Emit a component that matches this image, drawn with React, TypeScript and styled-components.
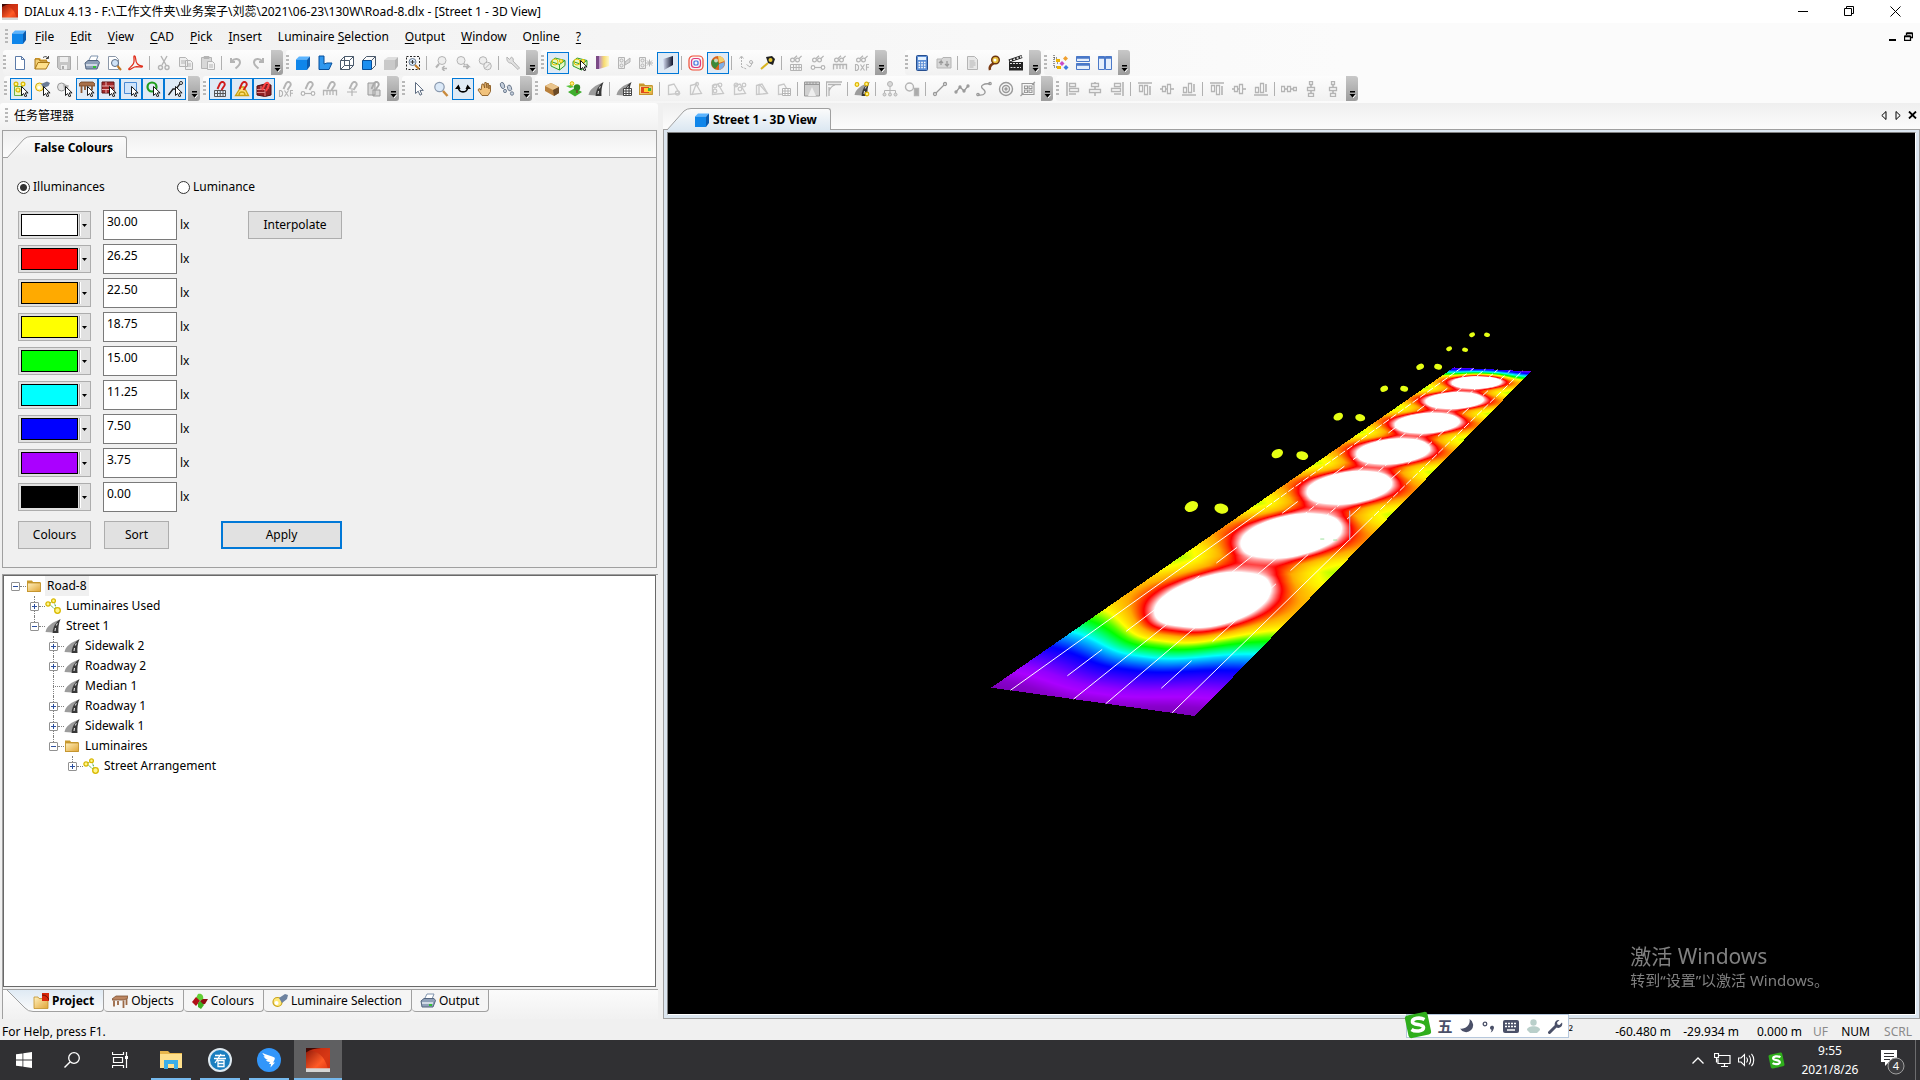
import React, { useLayoutEffect, useRef, useState } from "react";
import styled, { createGlobalStyle, css } from "styled-components";

/* ------------------------------------------------------------------ */
/* Theme values                                                        */
/* ------------------------------------------------------------------ */

const ui = `"Noto Sans", "Noto Sans CJK SC", sans-serif`;
const line = "#a0a0a0";
const accent = "#0078d7";

const GlobalStyle = createGlobalStyle`
  *, *::before, *::after { box-sizing: border-box; }
  html, body, #root { height: 100%; margin: 0; }
  body { font: 12px/16px ${ui}; color: #000; background: #f0f0f0; overflow: hidden; }
  button, input { font: inherit; color: inherit; margin: 0; }
  button { padding: 0; border: 0; background: none; }
  ul { list-style: none; margin: 0; padding: 0; }
  svg { display: block; flex: none; }
`;

/* ------------------------------------------------------------------ */
/* Icons, all on a 16 x 16 grid                                        */
/* ------------------------------------------------------------------ */

const G = "#b4b4b4";
const L = "#d8d8d8";

const magnet = (c: string) => (
  <path d="M5.5 8 8 2.500Q9.500 .2 11.500 1.200 13.500 2.500 12.300 4.800L9.500 9" fill="none" stroke={c} strokeWidth="1.900" />
);
const cursor = (
  <path d="M8.500 5.500v9l2.200-2 1.500 3.300 1.500-.7-1.400-3.200h2.800z" fill="#fff" stroke="#000" strokeWidth=".9" />
);
const glasses = (
  <g fill="none" stroke={G} strokeWidth="1.200">
    <circle cx="4.500" cy="5" r="1.900" /><circle cx="9.500" cy="5" r="1.900" /><path d="M6 3.500 9 .8M11 3.500l2.600-2.700" />
  </g>
);
const grid = (c: string) => (
  <path d="M2.500 9.500h11v6h-11zM2.500 12.500h11M5.500 9.500v6M8.200 9.500v6M11 9.500v6" fill="none" stroke={c} strokeWidth="1" />
);
const ruler = <path d="M1.500 14.500v-5h13v5M5 10v4M8 10v4M11 10v4" fill="none" stroke={G} strokeWidth="1.300" />;
const bone = (
  <g fill="#fff" stroke={G} strokeWidth="1.200"><path d="M4 12.500h8" /><circle cx="3" cy="12.500" r="1.800" /><circle cx="13" cy="12.500" r="1.800" /></g>
);
const dxf = (
  <path d="M1.500 9.500v6h1.500l1.500-1.500v-3L3 9.500zM6.500 9.500l4 6M10.500 9.500l-4 6M15 9.500h-2.500v6M12.500 12.300H15" fill="none" stroke={G} strokeWidth="1.100" />
);
const lamps = (
  <g>
    <path d="M4 5.500 8.500 3M4 6l7.500 6.500M9 3.500l2.500 8" stroke="#3aa33a" strokeWidth="1" strokeDasharray="2 1" />
    <g fill="#fff68a" stroke="#d9b800" strokeWidth="1.300"><circle cx="3" cy="6" r="2.100" /><circle cx="8.500" cy="2.800" r="1.900" /><circle cx="12.500" cy="12.500" r="2.800" /></g>
  </g>
);
const polyShape = (extra: React.ReactNode) => (
  <g fill="none" stroke="#c8c8c8" strokeWidth="1.300"><path d="M2.500 4.500 8 3l5.500 9.500-11 1z" />{extra}</g>
);
const road = (
  <g>
    <path d="M.5 14C1.500 8.500 7 4 15.500 1.500 11.500 5 8.500 9 7.500 14.500z" fill="#9c9c9c" />
    <path d="M7.500 15C8 9 10.500 4.500 15.500 1c-2 5-2.300 9-2 14z" fill="#383838" />
    <path d="M10 13l.5-3M11.300 7.500l1-2.200" stroke="#fff" strokeWidth=".9" />
  </g>
);
const greenCase = (
  <g strokeWidth="1" stroke="#2f9e2f"><path d="M1 6.500 5 3l10 2.500v5L9.500 15 1 11z" fill="#eaf7c4" /><path d="M1 6.500 9.500 9.500 15 5.500M9.500 9.500V15" fill="none" /><circle cx="5" cy="7" r="3" fill="none" stroke="#e5c400" /><circle cx="11" cy="6" r="1.600" fill="#ffe96b" stroke="#e5c400" /></g>
);
const cube = (
  <g><path d="M1 4.500 4 1.500h11l-3 3z" fill="#5ab4ff" /><path d="M1 4.500h11V15H1z" fill="#0f86ea" /><path d="M12 4.500l3-3V11l-3 4z" fill="#0a5cb0" /></g>
);
const folder = (
  <g><path d="M1 4V2.500h5l1 1.500h7.500V14H1z" fill="#c99a2e" /><path d="M1.500 5h13v8.500h-13z" fill="url(#fold)" stroke="#c0902a" strokeWidth=".8" /></g>
);
const printer = (
  <g><path d="M4.500 6 7 1h7l-2 5z" fill="#fff" stroke="#7f93ad" /><path d="M1 8l3-2.500h10l1.500 2L13 14H2z" fill="#8fa0b8" stroke="#53657f" /><path d="M2 10h11" stroke="#e6edf5" strokeWidth="1.500" /><path d="M9 12h3" stroke="#28c428" strokeWidth="1.800" /></g>
);
const dialux = (
  <g><path d="M0 0h16v16H0z" fill="url(#dx)" /><path d="M0 1.500C7 1 12.500 5 14.500 13.500H16V0H0z" fill="#c92c10" opacity=".75" /><path d="M0 0h10C6 .3 3 1 0 3z" fill="#3f0a05" /><path d="M0 13.500h16V16H0z" fill="#d5d5d5" /></g>
);
const footprint = (
  <g fill="#c4cedb" stroke="#5c6b80" strokeWidth=".8"><ellipse cx="3.500" cy="4.500" rx="2" ry="3.200" transform="rotate(-20 3.500 4.500)" /><ellipse cx="6" cy="10" rx="1.500" ry="1.700" /><ellipse cx="10.500" cy="7" rx="2" ry="3" transform="rotate(-20 10.500 7)" /><ellipse cx="13" cy="12.500" rx="1.600" ry="1.800" /></g>
);
const alignBar = (d: string, bars: string) => (
  <g fill="#fff" stroke={G} strokeWidth="1.300"><path d={d} fill="none" strokeWidth="1.600" /><path d={bars} /></g>
);

const icons: Record<string, React.ReactNode> = {
  dialux, cube, folder, printer, lamps, road,
  newFile: <path d="M3.500 1.500h6l3 3v10h-9zM9.500 1.500v3h3" fill="#fff" stroke="#5b7aa8" />,
  open: <g><path d="M1 3h5l1 1.500h6V7H1z" fill="#e0a83a" /><path d="M1 14V4h4l1 2h7v2" fill="#f4cf74" stroke="#a87716" /><path d="M1 14l3-6.500h11.500L12 14z" fill="#ffe08a" stroke="#a87716" /><path d="M9 2.500c2-1.500 4-1 5 .5M14.500 1v2.500H12" fill="none" stroke="#444" /></g>,
  save: <g><path d="M1.500 1.500h13v13h-11l-2-2z" fill="#c6c6c6" stroke="#aaa" /><path d="M4 2h8v5H4zM5 10h6v4.500H5z" fill="#eee" /><path d="M6 11h2v3H6z" fill="#aaa" /></g>,
  preview: <g><path d="M2.500 1.500h7l3 3v10h-10z" fill="#fff" stroke="#8b97a8" /><circle cx="9" cy="8" r="3.500" fill="#cfe3f7" stroke="#5a6c85" /><path d="M11.500 11l3.500 4" stroke="#c07a24" strokeWidth="2" /></g>,
  pdf: <path d="M6.500 1c2 0 0 5 3 8s5 1 5 2.500-5-.5-8 .5-4.500 3.500-5.500 2.500 3-3 4.500-6S5 1 6.500 1z" fill="none" stroke="#e0301e" strokeWidth="1.300" />,
  cut: <g fill="none" stroke={G} strokeWidth="1.400"><path d="M5 1l5 9M11 1 6 10" /><circle cx="4.500" cy="12.500" r="2" /><circle cx="11" cy="12.500" r="2" /></g>,
  copy: <path d="M1.500 2.500h6l2 2v7h-8zM7.500 5.500h5l2 2v7h-7zM3 6h4M3 8h4M9 9h4M9 11h4" fill="#eee" stroke={G} />,
  paste: <g stroke={G}><path d="M1.500 2.500h10v11h-10z" fill={L} /><path d="M4 1.500h5v2H4z" fill={G} /><path d="M7.500 6.500h5l2 2v6h-7zM9 10h4M9 12h4" fill="#f2f2f2" /></g>,
  undo: <path d="M3 3v4h4M3.500 6.500C6 3 12 3 12 7.500c0 2.500-2 4-4.500 6" fill="none" stroke={G} strokeWidth="2" />,
  redo: <path d="M13 3v4H9M12.500 6.500C10 3 4 3 4 7.500c0 2.500 2 4 4.500 6" fill="none" stroke={G} strokeWidth="2" />,
  lBlock: <path d="M2 1h5v8l3-1h5l-3 6.500H2z" fill="#2f97ee" stroke="#064f9b" />,
  wire: <path d="M1.500 5.500h9v9h-9zM5.500 1.500h9v9M1.500 5.500l4-4v9h9l-4 4M1.500 14.500l4-4M10.500 5.500l4-4" fill="#fff" stroke="#4b5a6c" />,
  halfCube: <g><path d="M1.500 5.500h9v9h-9z" fill="#1c8ff0" stroke="#064f9b" /><path d="M1.500 5.500l4-4h9v9l-4 4M10.500 5.500l4-4" fill="none" stroke="#4b5a6c" /></g>,
  greyCube: <g><path d="M1 5l4-3h10l-3 3z" fill="#dedede" /><path d="M1 5h11v10H1z" fill="#c9c9c9" /><path d="M12 5l3-3v9l-3 4z" fill="#b5b5b5" /></g>,
  zoomSel: <g><path d="M1.500 1.500h13v13h-13z" fill="none" stroke="#222" strokeDasharray="2 1.500" /><circle cx="7.500" cy="7" r="3.500" fill="#dcecfb" stroke="#6b7a90" /><path d="M5.500 7h4M7.500 5v4" stroke="#333" /><path d="M10 10l4 4" stroke="#c07a24" strokeWidth="2" /></g>,
  zoomPrev: <g stroke={G} fill="#eee"><circle cx="9" cy="5.500" r="4" /><path d="M6 9l-3 3.500" strokeWidth="2" /><path d="M9 13.500h5M9 13.500l2.500-2.500M9 13.500l2.500 2.500" strokeWidth="1.500" /></g>,
  zoomNext: <g stroke={G} fill="#eee"><circle cx="6" cy="5.500" r="4" /><path d="M9 9l4 4" strokeWidth="2" /><path d="M8 11.500h6l-2.500-2.500M14 11.500 11.500 14" strokeWidth="1.500" /></g>,
  zoomOff: <g stroke={G} fill="#eee"><circle cx="6" cy="5.500" r="3.800" /><circle cx="10.500" cy="11" r="3.800" /><path d="M8 13.500l5-5" /></g>,
  wrench: <path d="M2 2l2.500 2.500L6.500 2c2 1 2 3 1.500 4l6.500 7-1.500 1.500L6 8C4 8.500 1 6 2 2z" fill="#e2e2e2" stroke={G} />,
  room: greenCase,
  roomPick: <g>{greenCase}{cursor}</g>,
  texture: <g><path d="M2 1h3v13H2z" fill="#7b4a86" /><path d="M5 1h10v10L5 14z" fill="url(#tex)" /></g>,
  lightOn: <g stroke={G} fill="#eee"><path d="M2.500 2.500h6v11h-6z" /><circle cx="5.500" cy="5.500" r="1.500" /><circle cx="5.500" cy="10.500" r="1.500" /><path d="M9 7l5-4v4l-5 3z" fill={L} /></g>,
  lightStar: <g stroke={G} fill="#eee"><path d="M1.500 2.500h6v11h-6z" /><circle cx="4.500" cy="5.500" r="1.500" /><circle cx="4.500" cy="10.500" r="1.500" /><path d="M8 8h7M11.500 4.500v7M9 5.500l5 5M14 5.500l-5 5" /></g>,
  shade: <path d="M3 4l10-3v9L4 15z" fill="url(#shade)" />,
  iso: <g fill="none"><rect x="1" y="1" width="14" height="14" rx="4" stroke="#ef4b33" strokeWidth="1.200" /><rect x="3.500" y="3.500" width="9" height="9" rx="3" stroke="#e03a7b" strokeWidth="1.200" /><rect x="6" y="6" width="4" height="4" rx="1" stroke="#3a6de0" strokeWidth="1.200" /></g>,
  ball: <g><circle cx="8" cy="8" r="7" fill="#d8641c" /><path d="M8 1a7 7 0 0 1 6.500 5L9 8z" fill="#f3d06a" /><path d="M2 5l5-1 2 5-4 5A7 7 0 0 1 2 5z" fill="#3a8a3a" /><path d="M9 9l5.500-2A7 7 0 0 1 9 15z" fill="#7fb0e8" /><circle cx="6" cy="5.500" r="2" fill="#fff" opacity=".7" /></g>,
  axis: <g fill="none" stroke={G}><path d="M3.500 2v10M3.500 12l5 2" strokeDasharray="2 1" /><path d="M1.500 3.500l2-2.500 2 2.500M8.500 9.500 12 12l3-5" /><circle cx="13" cy="7" r="1.500" /></g>,
  tape: <g><path d="M6 2l6-1 3 3-2 6-5-2z" fill="#222" /><circle cx="10.500" cy="5" r="2" fill="#e8c832" /><path d="M8 8l-7 6" stroke="#d8b420" strokeWidth="2" /></g>,
  seeGrid: <g>{glasses}{grid(G)}</g>,
  seeBone: <g>{glasses}{bone}</g>,
  seeRuler: <g>{glasses}{ruler}</g>,
  seeDxf: <g>{glasses}{dxf}</g>,
  calc: <g><rect x="2.500" y=".5" width="11" height="15" rx="1" fill="#5d8fd6" stroke="#274f8f" /><path d="M4 2h8v3H4z" fill="#e5f2ff" /><path d="M4.500 7.500h7M4.500 10h7M4.500 12.500h7" stroke="#fff" strokeWidth="1.500" strokeDasharray="1.600 1.100" /></g>,
  swap: <g><path d="M1 4h5l1-1.500h8V13H1z" fill={L} stroke={G} /><path d="M5 10V6L3 8M5 6l2 2M11 6v5l-2-2M11 11l2-2" fill="none" stroke="#999" strokeWidth="1.300" /></g>,
  report: <path d="M3.500 1.500h7l3 3v10h-10zM5.500 6h5M5.500 8h6M5.500 10h6M5.500 12h4" fill="#e8e8e8" stroke={G} />,
  pov: <g><path d="M4 15C2 9 9 9 9 7" fill="none" stroke="#7a3a12" strokeWidth="2.500" /><circle cx="9.500" cy="5" r="3.800" fill="#e9c13c" stroke="#6d3510" strokeWidth="1.400" /><circle cx="9" cy="5" r="1.500" fill="#fff" /></g>,
  film: <g><path d="M1 7h14v8.500H1z" fill="#222" /><path d="M1 6 14 1.500" stroke="#222" strokeWidth="3" /><path d="M2 5.700l11.500-4" stroke="#fff" strokeWidth="1.400" strokeDasharray="2 1.500" /><path d="M2 8.500h12M2.500 12.500h5M9 12.500h4" stroke="#ddd" strokeDasharray="2 1" /></g>,
  tree: <g><path d="M1 0v12M1 3h3M1 12h4M4 8h2" fill="none" stroke="#333" strokeDasharray="1 1" /><path d="M3 4h4v3H3zM4 11h4v3H4z" fill="#f0b400" /><path d="M12.500 1 15 3.500 12.500 6 10 3.500z" fill="#f0a030" /><path d="M9 6l2.500 2.500L9 11 6.500 8.500z" fill="#c84bc8" /><path d="M13 10l2.500 2.500L13 15l-2.500-2.500z" fill="#3a7be0" /></g>,
  tileH: <g fill="#e6effb" stroke="#4a78c8"><path d="M1.500 1.500h13v5h-13zM1.500 8.500h13v6h-13z" /><path d="M1.500 2.500h13M1.500 9.500h13" strokeWidth="2.500" /></g>,
  tileV: <g fill="#e6effb" stroke="#4a78c8"><path d="M1.500 1.500h6v13h-6zM8.500 1.500h6v13h-6z" /><path d="M1.500 2.500h6M8.500 2.500h6" strokeWidth="2.500" /></g>,
  pickLamps: <g><path d="M1.500 5.500h8v9h-8z" fill="#eef6c8" stroke="#6bb04a" /><g fill="#fff68a" stroke="#d9b800" strokeWidth="1.200"><circle cx="3" cy="3" r="1.900" /><circle cx="10" cy="3" r="1.900" /><circle cx="5" cy="9" r="2" /></g>{cursor}</g>,
  pickSpot: <g><circle cx="4.500" cy="6" r="4" fill="#fff3a0" stroke="#d4a800" /><circle cx="4" cy="6.500" r="1.600" fill="#fff" /><path d="M6 3l6-2.500 3 1.500-1.500 3L8.500 7z" fill="#6b7c96" />{cursor}</g>,
  pickGrey: <g><circle cx="4.500" cy="6" r="4" fill="#e4e4e4" stroke="#999" /><path d="M6 3l6 1.500-2 5-3-1z" fill="#b0b0b0" />{cursor}</g>,
  pickTable: <g><path d="M0 3l2-2h12l2 2v2H0z" fill="#a8704a" stroke="#6e4222" strokeWidth=".8" /><path d="M2.500 5v7M13 5v4M6 5v4" stroke="#8d5a36" strokeWidth="1.800" />{cursor}</g>,
  pickWall: <g><path d="M1 1h12v11H1z" fill="#a52a2a" stroke="#5e1414" /><path d="M1 5h12M1 8.500h12M5 1v4M9 5v3.500M5 8.500V12" stroke="#e8b0b0" />{cursor}</g>,
  pickArea: <g><path d="M1.500 1.500h12v11h-12z" fill="#cfe4fb" stroke="#4a8ad4" />{cursor}</g>,
  pickRing: <g><circle cx="7" cy="6" r="4.500" fill="none" stroke="#1e9e1e" strokeWidth="2.200" />{cursor}</g>,
  pickLine: <g><path d="M1.500 14 6 8h3l5-6.500" fill="none" stroke="#222" strokeWidth="1.300" /><circle cx="14" cy="2" r="1.500" fill="#fff" stroke="#222" />{cursor}</g>,
  snapGrid: <g>{grid("#555")}{magnet("#d01c1c")}</g>,
  snapAngle: <g><path d="M1.500 14.500 7 6h3l4.500 8.500zM5 14a3 3 0 0 1 6 0" fill="#ffe27a" stroke="#caa010" strokeWidth="1.300" />{magnet("#d01c1c")}</g>,
  snapWall: <g><path d="M1 5l8-2 6 1v10l-6 1.500L1 14z" fill="#8f1f24" stroke="#4d0d10" /><path d="M1 8.500h8M1 11.500h8M5 5v3.500M9 8.500v7M12 4v4" stroke="#d88" /><path d="M6 9 8.500 4q2-3.500 4-1.500 1 2-1 4.500L10 10" fill="none" stroke="#ff4040" strokeWidth="1.800" /></g>,
  gSnapDxf: <g>{dxf}{magnet(G)}</g>,
  gSnapBone: <g>{bone}{magnet(G)}</g>,
  gSnapRuler: <g>{ruler}{magnet(G)}</g>,
  gSnapPlus: <g><path d="M3 11h10M8 7v8" stroke={G} strokeWidth="1.200" />{magnet(G)}</g>,
  gSnapPaste: <g><path d="M2 2h7v12H2zM7 9h7v6H7z" fill={L} stroke="#999" />{magnet("#aaa")}</g>,
  arrow: <path d="M4.500 1.500v11l2.700-2.300 1.800 4 1.800-.9-1.800-3.900h3.300z" fill="#fff" stroke="#5c6b80" />,
  zoom: <g><circle cx="6.500" cy="6" r="4.700" fill="#dbe9f8" stroke="#8a99ae" strokeWidth="1.200" /><path d="M10 10l4.500 5" stroke="#c98a3c" strokeWidth="2.500" /></g>,
  orbit: <g><path d="M3 6c1 6.500 9 6.500 10 0" fill="none" stroke="#000" strokeWidth="1.600" /><path d="M0 8l3.500-4.500L5.500 8zM10.500 8l2-4.500L16 8z" /></g>,
  hand: <path d="M4 9 2 7.500 1 9l4 5.500h6l2.500-4V4.500H12V8l-.5-5.500H10V7L9.200 1.500H7.800L7.700 7 6.500 3H5z" fill="#f1c27c" stroke="#8a5a20" strokeWidth=".9" />,
  feet: footprint,
  box: <g><path d="M1 5l6-3 8 4v6l-5 3-9-5z" fill="#b9803c" /><path d="M1 5l6-3 8 4-6 3z" fill="#e9c48c" /><path d="M9 9l6-3v6l-5 3z" fill="#6b4a26" /></g>,
  plant: <g><path d="M2 11l7-4 7 4-7 4.500z" fill="#3fae2e" /><path d="M0 5l5-1 3 2-4 1z" fill="#57c43c" /><circle cx="6" cy="2.500" r="1.800" fill="#fff08a" stroke="#d9b800" /><circle cx="11" cy="6.500" r="3.200" fill="#2d8b22" /><path d="M11 9v3" stroke="#6b4a26" strokeWidth="1.500" /></g>,
  roadGrid: <g>{road}<path d="M7.500 7.500h8v7h-8zM7.500 10h8M7.500 12.500h8M10 7.500v7M13 7.500v7" fill="#fff" stroke="#444" /></g>,
  falseFolder: <g>{folder}<path d="M3 6h8v6H3z" fill="#e04a1c" /><path d="M6 7h7v4H6z" fill="#ffd12a" /><path d="M10 7h3v3h-3z" fill="#3cb43c" /></g>,
  poly1: polyShape(<circle cx="11.500" cy="12" r="2" />),
  poly2: polyShape(<g><path d="M9 1 4 14" /><circle cx="9" cy="3" r="1.500" /></g>),
  poly3: polyShape(<g><circle cx="5" cy="5" r="1.800" /><circle cx="10" cy="4" r="1.800" /><circle cx="5" cy="10" r="1.800" /></g>),
  poly4: polyShape(<g><circle cx="4" cy="4" r="1.800" /><circle cx="12" cy="4" r="1.800" /><circle cx="8" cy="8" r="1.800" /></g>),
  poly5: polyShape(<path d="M5 3v11M5 3l8 9" />),
  poly6: <g>{polyShape(null)}<path d="M6.500 7.500h8v7h-8zM6.500 10h8M6.500 12.500h8M9 7.500v7M12 7.500v7" fill="#fff" stroke={G} /></g>,
  frame1: <g><path d="M.5 1h15v14H.5z" fill="#d0d0d0" stroke="#999" /><path d="M.5 3.500h15M3 1v2M6 1v2M9 1v2M12 1v2" stroke="#999" /><path d="M4 15 8 6l4 9z" fill="#eee" /></g>,
  frame2: <path d="M16 1H.5v14.500M2 3.500h13M3 6v9M3 10c1-3 3-5 6-6" fill="none" stroke={G} strokeWidth="1.300" />,
  roadLamps: <g>{road}<g fill="#fff68a" stroke="#e0b400" strokeWidth="1.200"><circle cx="3" cy="3.500" r="1.800" /><circle cx="12.500" cy="3" r="1.800" /><circle cx="13" cy="13" r="1.800" /></g></g>,
  org: <g fill={L} stroke={G}><circle cx="8" cy="3" r="2.500" /><path d="M8 6v4M2.500 12v-2.500h11V12M8 10v2" fill="none" /><circle cx="2.500" cy="13.500" r="1.500" /><circle cx="8" cy="13.500" r="1.500" /><circle cx="13.500" cy="13.500" r="1.500" /></g>,
  phoneLamp: <g fill="none" stroke={G} strokeWidth="1.400"><circle cx="5.500" cy="6" r="4" /><path d="M10.500 7.500h4v7h-4z" fill="#aaa" /></g>,
  seg: <g stroke="#999" fill="#fff" strokeWidth="1.300"><path d="M3 13 13 3" /><circle cx="3" cy="13" r="1.500" /><circle cx="13" cy="3" r="1.500" /></g>,
  zig: <g stroke="#999" fill="none" strokeWidth="1.300"><path d="M2 11l4-5 4 4 4-5" /><circle cx="2" cy="11" r="1" /><circle cx="6" cy="6" r="1" /><circle cx="10" cy="10" r="1" /><circle cx="14" cy="5" r="1" /></g>,
  curve: <g stroke="#999" fill="none" strokeWidth="1.300"><path d="M2 14c7 1 9-3 5-6s1-6 7-5" /><circle cx="2" cy="13.500" r="1.200" /><circle cx="14" cy="2.500" r="1.200" /></g>,
  target: <g fill="none" stroke="#999" strokeWidth="1.400"><circle cx="8" cy="8" r="6.500" /><circle cx="8" cy="8" r="3.500" /><circle cx="8" cy="8" r="1" /></g>,
  mesh: <path d="M2 2.500h12v11H2zM4.500 5h3v2.500h-3zM9 5h3v2.500H9zM4.500 9h3v2.500h-3zM9 9h3v2.500H9zM.5 15l3-3M12 3.500 15 .8" fill="none" stroke="#999" strokeWidth="1.100" />,
  alL: alignBar("M2 1v14M4 13h7", "M4.500 2.500h6v3h-6zM4.500 7.500h9v3h-9z"),
  alC: alignBar("M8 1v14", "M4.500 2.500h7v3h-7zM2.500 8.500h11v3h-11z"),
  alR: alignBar("M14 1v14M5 13h7", "M5.500 2.500h6v3h-6zM2.500 7.500h9v3h-9z"),
  alT: alignBar("M1 2h14M13 14V5", "M2.500 4.500h3v6h-3zM7.500 4.500h3v9h-3z"),
  alM: alignBar("M1 8h14", "M3.500 5.500h3v5h-3zM8.500 3.500h3v9h-3z"),
  alB: alignBar("M1 14h14M13 3v8", "M2.500 6.500h3v5h-3zM7.500 2.500h3v9h-3z"),
  dsH: alignBar("M3 8h10", "M.5 5.500h3v5h-3zM6.500 5.500h3v5h-3zM12.500 6.500h3v3h-3z"),
  dsV: alignBar("M8 3v11", "M6.500 .5h3v3h-3zM4.500 6.500h7v3h-7zM5.500 12.500h5v3h-5z"),
  project: <g><path d="M1 4h4l1 1.500h9V15.500H1z" fill="url(#fold)" stroke="#c0902a" strokeWidth=".8" /><path d="M9 0h7v8H9z" fill="#d8280c" /><path d="M9 2c4 0 6 2 7 5" fill="none" stroke="#6a1005" /></g>,
  table: <g><path d="M0 6l4-3h12v2l-4 2H0z" fill="#bb8560" stroke="#7b4f30" strokeWidth=".8" /><path d="M2 7.500v6M11.500 7.500V15M14.500 6v6M6 8v4" stroke="#9b6844" strokeWidth="1.800" /></g>,
  colours: <g><path d="M6 1c4-1 6 2 5 6L7 8 4 5z" fill="#63cf35" /><path d="M0 9l4-5 4 4-4 5z" fill="#b01018" /><path d="M8 8l3-2h5l-3 5-4 1z" fill="#8e0c12" /><path d="M6 10l2-2 4 4-3 4-3-2z" fill="#3fae20" /></g>,
  torch: <g><circle cx="5.500" cy="9" r="4.500" fill="#ffe97a" stroke="#c9a21a" strokeWidth="1.200" /><circle cx="4.500" cy="10" r="2" fill="#fff" /><path d="M7 5l6-4 3 1-1 4-5 4z" fill="#6d829f" /></g>,
};

const Icon = ({ name, size = 16 }: { name: string; size?: number }) => (
  <svg width={size} height={size} viewBox="0 0 16 16" aria-hidden="true">{icons[name]}</svg>
);

const HiddenDefs = styled.svg`
  position: absolute;
`;
const Gradients = () => (
  <HiddenDefs width="0" height="0" aria-hidden="true">
    <defs>
      <linearGradient id="fold" x2="1" y2="1"><stop stopColor="#fff0bd" /><stop offset="1" stopColor="#e0a536" /></linearGradient>
      <linearGradient id="dx" x2="1" y2="1"><stop stopColor="#8a1407" /><stop offset=".6" stopColor="#ff5a26" /><stop offset="1" stopColor="#d8300f" /></linearGradient>
      <linearGradient id="tex"><stop stopColor="#b98ad0" /><stop offset=".5" stopColor="#f7dc70" /><stop offset="1" stopColor="#fff7c8" /></linearGradient>
      <linearGradient id="shade"><stop stopColor="#d8e0f4" /><stop offset="1" stopColor="#10142c" /></linearGradient>
    </defs>
  </HiddenDefs>
);

/* ------------------------------------------------------------------ */
/* Title bar and menu                                                  */
/* ------------------------------------------------------------------ */

const Window = styled.div`
  height: 100vh;
  display: flex;
  flex-direction: column;
`;

const TitleBar = styled.header`
  display: flex;
  align-items: center;
  height: 23px;
  flex: none;
  padding: 0 2px;
  background: #fff;
`;
const Title = styled.h1`
  flex: 1;
  margin: 0 0 0 6px;
  font-size: 12px;
  font-weight: 400;
`;
const CaptionButton = styled.button`
  width: 46px;
  height: 22px;
  display: grid;
  place-items: center;
`;
const Chrome = styled.div`
  flex: none;
  padding-bottom: 1px;
  background: linear-gradient(90deg, #f0f0f0, #fbfbfb 70%);
`;
const MenuBar = styled.nav`
  display: flex;
  align-items: center;
  height: 27px;
  padding: 0 4px 0 5px;
`;
const MenuItem = styled.button`
  padding: 0 8px;
  line-height: 20px;
  u { text-underline-offset: 2px; }
`;
const Spacer = styled.div`
  flex: 1;
`;
const MdiButton = styled.button`
  width: 16px;
  height: 16px;
  display: grid;
  place-items: center;
`;

const menu: [string, string, string][] = [
  ["", "F", "ile"], ["", "E", "dit"], ["", "V", "iew"], ["", "C", "AD"], ["", "P", "ick"], ["", "I", "nsert"],
  ["Luminaire ", "S", "election"], ["", "O", "utput"], ["", "W", "indow"], ["O", "n", "line"], ["", "?", ""],
];

/* ------------------------------------------------------------------ */
/* Toolbars                                                            */
/* ------------------------------------------------------------------ */

const ToolRow = styled.div<{ $inset: number }>`
  display: flex;
  height: 26px;
  padding-left: ${p => p.$inset}px;
  gap: 3px;
`;
const Tools = styled.div<{ $apart?: boolean }>`
  display: flex;
  align-items: center;
  height: 25px;
  margin-left: ${p => (p.$apart ? "15px" : 0)};
  border-radius: 3px 0 0 3px;
  background: linear-gradient(#fdfdfd, #f1f1f1);
`;
const Grip = styled.span`
  width: 3px;
  height: 15px;
  margin-right: 3px;
  background: repeating-linear-gradient(#b8b8b8 0 2px, transparent 2px 4px);
`;
const ToolButton = styled.button<{ $on?: boolean }>`
  width: 22px;
  height: 22px;
  display: grid;
  place-items: center;
  ${p => p.$on && css`border: 1px solid ${accent}; background: #dfeaf5;`}
`;
const Divider = styled.span`
  width: 1px;
  height: 14px;
  margin: 0 3px 0 2px;
  background: #b0b0b0;
`;
const Overflow = styled.button`
  width: 12px;
  height: 25px;
  margin-left: 2px;
  display: flex;
  align-items: flex-end;
  justify-content: center;
  padding-bottom: 3px;
  border-radius: 0 3px 3px 0;
  background: linear-gradient(#c8c8c8, #9c9c9c);
`;

/* "|" is a divider, a leading "*" marks a pressed button */
const rowOne = [
  "newFile open save | printer preview pdf | cut copy paste | undo redo",
  "cube lBlock wire halfCube greyCube zoomSel | zoomPrev zoomNext zoomOff | wrench",
  "*room roomPick texture lightOn lightStar *shade | iso *ball | axis tape | seeGrid seeBone seeRuler seeDxf",
  "calc swap | report pov film",
  "tree tileH tileV",
];
const rowTwo = [
  "*pickLamps pickSpot pickGrey *pickTable *pickWall *pickArea *pickRing *pickLine",
  "*snapGrid *snapAngle *snapWall gSnapDxf gSnapBone gSnapRuler gSnapPlus gSnapPaste",
  "arrow zoom *orbit hand feet",
  "box plant road | roadGrid falseFolder | poly1 poly2 poly3 poly4 poly5 poly6 | frame1 frame2 | roadLamps | org phoneLamp | seg zig curve target mesh",
  "alL alC alR | alT alM alB | alT alM alB | dsH dsV dsV",
];

const ToolGroup = ({ spec, apart }: { spec: string; apart?: boolean }) => (
  <Tools $apart={apart} role="toolbar">
    <Grip />
    {spec.split(" ").map((item, i) => {
      if (item === "|") return <Divider key={i} />;
      const name = item.replace("*", "");
      return (
        <ToolButton key={i} $on={item.startsWith("*")} aria-label={name}>
          <Icon name={name} />
        </ToolButton>
      );
    })}
    <Overflow aria-label="More buttons">
      <svg width="7" height="7" viewBox="0 0 7 7"><path d="M1 0h5v1.500H1zM.5 3h6l-3 3.500z" /><path d="M7 3.500 4 7" stroke="#fff" /></svg>
    </Overflow>
  </Tools>
);

/* ------------------------------------------------------------------ */
/* Left side: task manager                                             */
/* ------------------------------------------------------------------ */

const Body = styled.main`
  flex: 1;
  min-height: 0;
  display: flex;
  gap: 5px;
`;
const Manager = styled.aside`
  flex: 0 0 658px;
  display: flex;
  flex-direction: column;
  min-height: 0;
`;
const ManagerCaption = styled.div`
  display: flex;
  align-items: center;
  flex: none;
  height: 27px;
  padding: 0 0 2px 5px;
  gap: 3px;
  border-radius: 3px 3px 0 0;
  background: linear-gradient(#fdfdfd, #f1f1f1);
`;
const Panel = styled.section`
  flex: none;
  height: 438px;
  margin: 0 1px 6px 2px;
  border: 1px solid ${line};
  display: flex;
  flex-direction: column;
`;
const TopTabs = styled.div`
  display: flex;
  align-items: flex-end;
  flex: none;
  height: 27px;
  padding: 0 1px 0 4px;
  border-bottom: 1px solid ${line};
  background: linear-gradient(#efefef, #fcfcfc);
`;
const TopTab = styled.button`
  display: flex;
  height: 22px;
  margin-bottom: -1px;
  font-weight: 700;
`;
const TabFace = styled.span<{ $tint: string }>`
  display: flex;
  align-items: center;
  gap: 3px;
  height: 22px;
  padding: 0 13px 0 3px;
  border-top: 1px solid ${line};
  border-right: 1px solid ${line};
  border-radius: 0 3px 0 0;
  background: linear-gradient(#fbfbfb, ${p => p.$tint});
`;
const TabSlope = ({ id, tint }: { id: string; tint: string }) => (
  <svg width="24" height="22" viewBox="0 0 24 22">
    <linearGradient id={id} x2="0" y2="1"><stop stopColor="#fbfbfb" /><stop offset="1" stopColor={tint} /></linearGradient>
    <path d="M0 22 17 3Q20 .5 24 .5V22z" fill={`url(#${id})`} />
    <path d="M0 22 17 3Q20 .5 24 .5" fill="none" stroke={line} />
  </svg>
);
const Form = styled.form`
  flex: 1;
  padding: 20px 15px 0;
  background: #f0f0f0;
`;
const Radios = styled.div`
  display: grid;
  grid-template-columns: 160px auto;
  margin: 0 -1px 14px;
`;
const RadioLabel = styled.label`
  display: flex;
  align-items: center;
  gap: 3px;
  line-height: 18px;
`;
const Radio = styled.input`
  appearance: none;
  width: 13px;
  height: 13px;
  margin: 0;
  border: 1px solid #333;
  border-radius: 50%;
  background: #fff;
  &:checked { background: radial-gradient(circle, #333 0 3px, #fff 4px); }
`;
const Scale = styled.div`
  display: grid;
  row-gap: 4px;
`;
const ScaleRow = styled.div`
  display: flex;
  align-items: center;
  height: 30px;
`;
const Swatch = styled.button<{ $fill: string }>`
  width: 73px;
  height: 28px;
  margin-right: 12px;
  padding: 2px;
  display: flex;
  align-items: center;
  gap: 1px;
  border: 1px solid #adadad;
  background: #e1e1e1;
  &::before {
    content: "";
    width: 57px;
    height: 22px;
    border: 1px solid #000;
    background: ${p => p.$fill};
  }
`;
const Drop = styled.span`
  flex: 1;
  height: 22px;
  display: grid;
  place-items: center;
  border-left: 1px solid #a0a0a0;
  box-shadow: inset 1px 0 #fff;
`;
const ValueBox = styled.input`
  width: 74px;
  height: 30px;
  margin-right: 3px;
  padding: 0 3px 7px;
  border: 1px solid #7a7a7a;
  background: #fff;
`;
const Unit = styled.label`
  width: 68px;
`;
const PushButton = styled.button<{ $w: number; $main?: boolean }>`
  width: ${p => p.$w}px;
  height: 28px;
  border: ${p => (p.$main ? `2px solid ${accent}` : "1px solid #adadad")};
  background: #e1e1e1;
`;
const FormButtons = styled.div`
  display: flex;
  margin-top: 9px;
  gap: 13px;
  button:last-child { margin-left: 39px; }
`;

const levels: [string, string][] = [
  ["#ffffff", "30.00"], ["#ff0000", "26.25"], ["#ffaa00", "22.50"], ["#ffff00", "18.75"], ["#00ff00", "15.00"],
  ["#00ffff", "11.25"], ["#0000ff", "7.50"], ["#aa00ff", "3.75"], ["#000000", "0.00"],
];

const FalseColours = () => {
  const [mode, setMode] = useState("ill");
  return (
    <Panel>
      <TopTabs>
        <TopTab><TabSlope id="slopeA" tint="#f0f0f0" /><TabFace $tint="#f0f0f0">False Colours</TabFace></TopTab>
      </TopTabs>
      <Form onSubmit={e => e.preventDefault()}>
        <Radios>
          <RadioLabel><Radio type="radio" name="mode" checked={mode === "ill"} onChange={() => setMode("ill")} />Illuminances</RadioLabel>
          <RadioLabel><Radio type="radio" name="mode" checked={mode === "lum"} onChange={() => setMode("lum")} />Luminance</RadioLabel>
        </Radios>
        <Scale>
          {levels.map(([fill, value], i) => (
            <ScaleRow key={value}>
              <Swatch type="button" $fill={fill} aria-label={`Colour ${i + 1}`}>
                <Drop><svg width="5" height="3"><path d="M0 0h5L2.500 3z" /></svg></Drop>
              </Swatch>
              <ValueBox id={`level${i}`} defaultValue={value} />
              <Unit htmlFor={`level${i}`}>lx</Unit>
              {i === 0 && <PushButton type="button" $w={94}>Interpolate</PushButton>}
            </ScaleRow>
          ))}
        </Scale>
        <FormButtons>
          <PushButton type="button" $w={73}>Colours</PushButton>
          <PushButton type="button" $w={65}>Sort</PushButton>
          <PushButton type="submit" $w={121} $main>Apply</PushButton>
        </FormButtons>
      </Form>
    </Panel>
  );
};

/* Project tree */

const TreeFrame = styled.section`
  flex: 1;
  min-height: 0;
  margin-left: 2px;
  border: 1px solid ${line};
  border-right: 0;
  border-bottom: 0;
  display: flex;
  flex-direction: column;
`;
const TreeBox = styled.div`
  flex: 1;
  min-height: 0;
  margin-right: 2px;
  border: 1px solid #696969;
  background: #fff;
  padding-left: 7px;
`;
const Branch = styled.ul`
  ul { margin-left: 19px; }
`;
const Leaf = styled.li`
  position: relative;
  ul ul > &::before {
    content: "";
    position: absolute;
    left: 4px;
    top: 0;
    height: 10px;
    border-left: 1px dotted #808080;
  }
  ul ul > &:not(:last-child)::before { height: 100%; }
`;
const NodeRow = styled.div`
  position: relative;
  display: flex;
  align-items: center;
  height: 20px;
`;
const Expander = styled.button`
  width: 9px;
  height: 9px;
  border: 1px solid #919191;
  border-radius: 1px;
  background: #fff;
  display: grid;
  place-items: center;
`;
const Dots = styled.span<{ $long?: boolean }>`
  width: ${p => (p.$long ? 11 : 6)}px;
  margin-left: ${p => (p.$long ? 4 : 0)}px;
  border-top: 1px dotted #808080;
`;
const NodeName = styled.span<{ $sel?: boolean }>`
  margin-left: 3px;
  padding: 2px 2px;
  background: ${p => (p.$sel ? "#f0f0f0" : "none")};
`;

type TreeItem = { name: string; icon: string; kids?: TreeItem[]; closed?: boolean; sel?: boolean };
const tree: TreeItem = {
  name: "Road-8", icon: "folder", sel: true, kids: [
    { name: "Luminaires Used", icon: "lamps", closed: true },
    { name: "Street 1", icon: "road", kids: [
      { name: "Sidewalk 2", icon: "road", closed: true },
      { name: "Roadway 2", icon: "road", closed: true },
      { name: "Median 1", icon: "road" },
      { name: "Roadway 1", icon: "road", closed: true },
      { name: "Sidewalk 1", icon: "road", closed: true },
      { name: "Luminaires", icon: "folder", kids: [{ name: "Street Arrangement", icon: "lamps", closed: true }] },
    ] },
  ],
};
const TreeNode = ({ item }: { item: TreeItem }) => (
  <Leaf>
    <NodeRow>
      {(item.kids || item.closed) && (
        <Expander aria-label={item.closed ? "Expand" : "Collapse"}>
          <svg width="5" height="5"><path d={item.closed ? "M0 2.500h5M2.500 0v5" : "M0 2.500h5"} stroke="#2c4f9e" /></svg>
        </Expander>
      )}
      <Dots $long={!item.kids && !item.closed} />
      <Icon name={item.icon} />
      <NodeName $sel={item.sel}>{item.name}</NodeName>
    </NodeRow>
    {item.kids && <ul>{item.kids.map(k => <TreeNode key={k.name} item={k} />)}</ul>}
  </Leaf>
);

const BottomTabs = styled.div`
  flex: none;
  display: flex;
  height: 30px;
  margin-top: 2px;
  border-top: 1px solid ${line};
  background: linear-gradient(#fbfbfb, #f1f1f1);
`;
const BottomTab = styled.button<{ $on?: boolean }>`
  display: flex;
  align-items: center;
  gap: 3px;
  height: 22px;
  padding: 0 9px 0 ${p => (p.$on ? 0 : 8)}px;
  border-right: 1px solid ${line};
  border-bottom: 1px solid ${line};
  border-radius: 0 0 4px ${p => (p.$on ? 0 : 4)}px;
  font-weight: ${p => (p.$on ? 700 : 400)};
  background: ${p => (p.$on ? "linear-gradient(#dfeaf4, #fbfbfb)" : "#f5f5f5")};
`;
const BottomSlope = () => (
  <svg width="30" height="22" viewBox="0 0 30 22">
    <linearGradient id="slopeC" x2="0" y2="1"><stop stopColor="#dfeaf4" /><stop offset="1" stopColor="#fbfbfb" /></linearGradient>
    <path d="M4 0 22 18Q25 21.500 30 21.500V0z" fill="url(#slopeC)" />
    <path d="M4 0 22 18Q25 21.500 30 21.500" fill="none" stroke={line} />
  </svg>
);

/* ------------------------------------------------------------------ */
/* Right side: 3D view                                                 */
/* ------------------------------------------------------------------ */

const Document = styled.section`
  flex: 1;
  min-width: 0;
  display: flex;
  flex-direction: column;
`;
const TabNav = styled.button`
  width: 14px;
  height: 26px;
  display: grid;
  place-items: center;
  padding-bottom: 2px;
`;
const ViewFrame = styled.div`
  flex: 1;
  min-height: 0;
  padding: 2px 3px 3px;
  border: 1px solid ${line};
  border-top: 0;
  background: #dce6f0;
  display: flex;
`;
const View = styled.div`
  position: relative;
  flex: 1;
  min-width: 0;
  border: 1px solid #808080;
  border-right-color: #fff;
  border-bottom-color: #fff;
  background: #000;
  overflow: hidden;
`;
const Scene = styled.canvas`
  display: block;
  width: 100%;
  height: 100%;
`;
const Watermark = styled.div`
  position: absolute;
  right: 86px;
  bottom: 22px;
  color: #808080;
  font-size: 15px;
  line-height: 24px;
`;
const WatermarkTitle = styled.div`
  font-size: 21px;
`;

/* Illuminance by distance from a pole pair, in pole spacings -> lux */
const fallOff: [number, number][] = [
  [0, 40], [0.1, 39.3], [0.2, 36], [0.27, 31.5], [0.31, 28.5], [0.36, 25], [0.42, 20.7], [0.5, 15.8], [0.56, 13.2],
  [0.63, 10.3], [0.73, 7.5], [0.9, 4.2], [1.02, 3], [1.4, 1.2], [2, 0],
];
const luxAt = (d: number) => {
  for (let i = 1; i < fallOff.length; i++) {
    const [x1, y1] = fallOff[i];
    if (d < x1) {
      const [x0, y0] = fallOff[i - 1];
      return y0 + ((y1 - y0) * (d - x0)) / (x1 - x0);
    }
  }
  return 0;
};
const poles = [0, 1, 2, 3, 4, 5, 6];
const firstPole = 0.1297;
const spacing = 0.1283;
const blend = 1.3;
const round = 2.15;
const lux = (s: number, t: number) => {
  const pos = (t - firstPole) / spacing;
  const aside = 0.44 * (1 - Math.exp(-Math.pow(Math.abs(s - 0.5) / 0.256, 1.6)));
  const asidePart = Math.pow(aside, round);
  let sum = 0;
  for (const k of poles) {
    const reach = Math.pow(Math.pow(Math.abs(pos - k), round) + asidePart, 1 / round);
    sum += Math.pow(luxAt(reach), blend);
  }
  return Math.pow(sum, 1 / blend);
};
const ramp = levels.map(([hex, v]) => ({
  v: parseFloat(v),
  rgb: [1, 3, 5].map(i => parseInt(hex.slice(i, i + 2), 16)),
}));
const falseColour = (e: number) => {
  if (e >= 30) return ramp[0].rgb;
  for (let i = 1; i < ramp.length; i++) {
    if (e >= ramp[i].v) {
      const f = (e - ramp[i].v) / (ramp[i - 1].v - ramp[i].v);
      return ramp[i].rgb.map((c, n) => c + (ramp[i - 1].rgb[n] - c) * f);
    }
  }
  return [0, 0, 0];
};

/* Camera: street plane (s across, t along) -> view coordinates */
const cam = { a: 145.2, b: 3165.7, c: 990.6, d: -6.84, e: 363, f: 688.3, g: -0.04917, h: 1.8591 };
const origin = { x: 667, y: 133 };
const project = (s: number, t: number): [number, number] => {
  const w = cam.g * s + cam.h * t + 1;
  return [(cam.a * s + cam.b * t + cam.c) / w - origin.x, (cam.d * s + cam.e * t + cam.f) / w - origin.y];
};
const unproject = (vx: number, vy: number) => {
  const x = vx + origin.x;
  const y = vy + origin.y;
  const a1 = cam.a - cam.g * x, b1 = cam.b - cam.h * x, c1 = x - cam.c;
  const a2 = cam.d - cam.g * y, b2 = cam.e - cam.h * y, c2 = y - cam.f;
  const det = a1 * b2 - a2 * b1;
  return [(c1 * b2 - c2 * b1) / det, (a1 * c2 - a2 * c1) / det];
};
const lampHeads = [
  [524, 374, 7], [554, 376, 7], [610, 321, 6], [635, 323, 6], [671, 284, 5], [693, 285, 5], [717, 256, 4], [737, 256, 4],
  [753, 234, 4], [771, 234, 4], [782, 216, 3], [798, 217, 3], [805, 202, 3], [820, 202, 3],
];

const drawScene = (canvas: HTMLCanvasElement) => {
  const width = canvas.clientWidth;
  const height = canvas.clientHeight;
  canvas.width = width;
  canvas.height = height;
  const ctx = canvas.getContext("2d");
  if (!ctx || !width || !height) return;
  const k = Math.min(width / 1248, height / 882);
  const image = ctx.createImageData(width, height);
  for (let y = 0; y < height; y++) {
    for (let x = 0; x < width; x++) {
      const o = (y * width + x) * 4;
      image.data[o + 3] = 255;
      const [s, t] = unproject((x + 0.5) / k, (y + 0.5) / k);
      if (s < 0 || s > 1 || t < 0 || t > 1) continue;
      const [r, g, b] = falseColour(lux(s, t));
      image.data[o] = r;
      image.data[o + 1] = g;
      image.data[o + 2] = b;
    }
  }
  ctx.putImageData(image, 0, 0);
  ctx.scale(k, k);
  ctx.strokeStyle = "#fff";
  const stroke = (s: number, t0: number, t1: number) => {
    ctx.beginPath();
    ctx.moveTo(...project(s, t0));
    ctx.lineTo(...project(s, t1));
    ctx.stroke();
  };
  [0.0985, 0.416, 0.575, 0.8925].forEach(s => {
    ctx.lineWidth = 1;
    stroke(s, 0, 0.3);
    ctx.setLineDash([7, 2]);
    stroke(s, 0.3, 1);
    ctx.setLineDash([]);
  });
  [0.26, 0.737].forEach(s => {
    for (let t = 0.021; t < 1; t += 0.0564) stroke(s, t, Math.min(1, t + 0.032));
  });
  lampHeads.forEach(([x, y, r], i) => {
    ctx.fillStyle = "#e6ff14";
    ctx.beginPath();
    ctx.ellipse(x, y, r, r * 0.72, i % 2 ? 0.2 : -0.45, 0, Math.PI * 2);
    ctx.fill();
  });
  ctx.strokeStyle = "#b8bedc";
  ctx.beginPath();
  ctx.moveTo(682.5, 378);
  ctx.lineTo(682.5, 408);
  ctx.stroke();
  ctx.fillStyle = "#9be09b";
  ctx.fillRect(653, 406, 4, 1);
  ctx.fillRect(666, 407, 4, 1);
};

const StreetView = () => {
  const ref = useRef<HTMLCanvasElement>(null);
  useLayoutEffect(() => {
    const canvas = ref.current;
    if (!canvas) return;
    const observer = new ResizeObserver(() => drawScene(canvas));
    observer.observe(canvas);
    return () => observer.disconnect();
  }, []);
  return <Scene ref={ref} role="img" aria-label="Street 1, false colour rendering" />;
};

/* ------------------------------------------------------------------ */
/* Status bar, input method bar, taskbar                               */
/* ------------------------------------------------------------------ */

const StatusBar = styled.footer`
  position: relative;
  flex: none;
  display: flex;
  align-items: center;
  height: 21px;
  padding: 4px 5px 0 2px;
  background: #f0f0f0;
`;
const StatusHelp = styled.span`
  flex: 1;
`;
const StatusCell = styled.span<{ $w: number; $dim?: boolean }>`
  width: ${p => p.$w}px;
  padding-right: 3px;
  text-align: right;
  white-space: nowrap;
  color: ${p => (p.$dim ? "#8a8a8a" : "#000")};
`;
const ImeBar = styled.div`
  position: absolute;
  right: 351px;
  top: -5px;
  height: 24px;
  display: flex;
  align-items: center;
  gap: 6px;
  padding: 0 5px 0 30px;
  border: 1px solid #b5c7dc;
  background: #fff;
  color: #4a5068;
  font-size: 15px;
  font-weight: 700;
`;
const ImeLogo = styled.div`
  position: absolute;
  left: -3px;
  top: -4px;
`;
const ImeItem = styled.button`
  width: 16px;
  height: 20px;
  display: grid;
  place-items: center;
`;
const SogouMark = ({ size }: { size: number }) => (
  <svg width={size} height={size} viewBox="0 0 28 28">
    <rect x="2.500" y="2.500" width="23" height="23" rx="3" fill="#2fae1c" transform="rotate(-12 14 14)" />
    <path d="M20.500 8.500C16 6 8 7 8.500 11c.5 3.500 11 1.500 11 5.500 0 4-8.500 4.500-12 2" fill="none" stroke="#fff" strokeWidth="3.600" />
  </svg>
);

const Taskbar = styled.nav`
  flex: none;
  display: flex;
  height: 40px;
  background: #303033;
  color: #fff;
`;
const OpenApps = styled.div`
  display: flex;
  gap: 1px;
  margin-left: 3px;
`;
const TaskButton = styled.button<{ $open?: boolean; $active?: boolean }>`
  width: 48px;
  height: 40px;
  display: grid;
  place-items: center;
  position: relative;
  background: ${p => (p.$active ? "#5f5f61" : "none")};
  ${p => p.$open && css`
    &::after {
      content: "";
      position: absolute;
      left: ${p.$active ? 0 : 4}px;
      right: ${p.$active ? 0 : 4}px;
      bottom: 0;
      height: 2px;
      background: #76b9ed;
    }
  `}
`;
const Tray = styled.div`
  display: flex;
  align-items: center;
  padding-right: 4px;
`;
const TrayButton = styled.button<{ $wide?: boolean }>`
  width: ${p => (p.$wide ? 36 : 24)}px;
  height: 40px;
  display: grid;
  place-items: center;
`;
const Clock = styled.time`
  width: 72px;
  text-align: center;
  line-height: 19px;
`;
const Notify = styled.button`
  width: 50px;
  height: 40px;
  padding: 3px 0 0 14px;
  border-right: 1px solid #6c6c6e;
`;

const App = () => (
  <Window>
    <GlobalStyle />
    <Gradients />
    <TitleBar>
      <Icon name="dialux" />
      <Title>DIALux 4.13 - F:\工作文件夹\业务案子\刘蕊\2021\06-23\130W\Road-8.dlx - [Street 1 - 3D View]</Title>
      <CaptionButton aria-label="Minimize"><svg width="10" height="11"><path d="M0 5.500h10" stroke="#000" /></svg></CaptionButton>
      <CaptionButton aria-label="Restore"><svg width="11" height="11"><path d="M.5 2.500h7v7h-7zM2.500 2.500v-2h7v7h-2" fill="none" stroke="#000" /></svg></CaptionButton>
      <CaptionButton aria-label="Close"><svg width="11" height="11"><path d="M.5 .5l10 10M10.500 .5l-10 10" stroke="#000" /></svg></CaptionButton>
    </TitleBar>

    <Chrome>
      <MenuBar>
        <Grip />
        <Icon name="cube" />
        {menu.map(([pre, key, post]) => (
          <MenuItem key={pre + key + post}>{pre}<u>{key}</u>{post}</MenuItem>
        ))}
        <Spacer />
        <MdiButton aria-label="Minimize document"><svg width="7" height="9"><path d="M0 8h7" stroke="#000" strokeWidth="2" /></svg></MdiButton>
        <MdiButton aria-label="Restore document"><svg width="9" height="9"><path d="M.5 4.500h6v4h-6zM2.500 3V1.500h6v4H7M.5 4h6M2.500 1h6" fill="none" stroke="#000" strokeWidth="1.300" /></svg></MdiButton>
      </MenuBar>
      <ToolRow $inset={3}>{rowOne.map((spec, i) => <ToolGroup key={i} spec={spec} apart={i === 3} />)}</ToolRow>
      <ToolRow $inset={4}>{rowTwo.map((spec, i) => <ToolGroup key={i} spec={spec} />)}</ToolRow>
    </Chrome>

    <Body>
      <Manager>
        <ManagerCaption><Grip />任务管理器</ManagerCaption>
        <FalseColours />
        <TreeFrame>
          <TreeBox><Branch><TreeNode item={tree} /></Branch></TreeBox>
          <BottomTabs>
            <BottomSlope />
            <BottomTab $on><Icon name="project" />Project</BottomTab>
            <BottomTab><Icon name="table" />Objects</BottomTab>
            <BottomTab><Icon name="colours" />Colours</BottomTab>
            <BottomTab><Icon name="torch" />Luminaire Selection</BottomTab>
            <BottomTab><Icon name="printer" />Output</BottomTab>
          </BottomTabs>
        </TreeFrame>
      </Manager>

      <Document>
        <TopTabs>
          <TopTab><TabSlope id="slopeB" tint="#dce8f2" /><TabFace $tint="#dce8f2"><Icon name="cube" />Street 1 - 3D View</TabFace></TopTab>
          <Spacer />
          <TabNav aria-label="Previous tab"><svg width="6" height="9"><path d="M5 .5v8L.8 4.500z" fill="none" stroke="#000" /></svg></TabNav>
          <TabNav aria-label="Next tab"><svg width="6" height="9"><path d="M1 .5v8l4.200-4z" fill="none" stroke="#000" /></svg></TabNav>
          <TabNav aria-label="Close tab"><svg width="9" height="8"><path d="M1 .5l7 7M8 .5l-7 7" stroke="#000" strokeWidth="1.800" /></svg></TabNav>
        </TopTabs>
        <ViewFrame>
          <View>
            <StreetView />
            <Watermark>
              <WatermarkTitle>激活 Windows</WatermarkTitle>
              转到“设置”以激活 Windows。
            </Watermark>
          </View>
        </ViewFrame>
      </Document>
    </Body>

    <StatusBar>
      <StatusHelp>For Help, press F1.</StatusHelp>
      <StatusCell $w={40}>²</StatusCell>
      <StatusCell $w={98}>-60.480 m</StatusCell>
      <StatusCell $w={68}>-29.934 m</StatusCell>
      <StatusCell $w={63}>0.000 m</StatusCell>
      <StatusCell $w={26} $dim>UF</StatusCell>
      <StatusCell $w={42}>NUM</StatusCell>
      <StatusCell $w={42} $dim>SCRL</StatusCell>
      <ImeBar>
        <ImeLogo><SogouMark size={28} /></ImeLogo>
        <ImeItem>五</ImeItem>
        <ImeItem aria-label="Half width"><svg width="14" height="14"><path d="M9.500 0A7 7 0 1 1 0 9.500 8 8 0 0 0 9.500 0z" fill="#4a5068" /></svg></ImeItem>
        <ImeItem aria-label="Punctuation"><svg width="14" height="14"><circle cx="3" cy="5" r="1.800" fill="none" stroke="#4a5068" strokeWidth="1.300" /><path d="M8 8.500a2 2 0 1 1 3.500 1.500c-.3 2-1.500 3-3 3.500 1-1 1-2 1-2.800A2 2 0 0 1 8 8.500z" fill="#4a5068" /></svg></ImeItem>
        <ImeItem aria-label="Keyboard"><svg width="16" height="13"><rect width="16" height="13" rx="2" fill="#4a5068" /><path d="M2 3.500h12M2 6.500h12" stroke="#fff" strokeWidth="1.500" strokeDasharray="2 1" /><path d="M4 10h8" stroke="#fff" strokeWidth="1.500" /></svg></ImeItem>
        <ImeItem aria-label="Account"><svg width="13" height="14"><circle cx="6.500" cy="3.500" r="3.200" fill="#b9cfca" /><path d="M0 11c0-5 13-5 13 0l-3 3H3z" fill="#b9cfca" /></svg></ImeItem>
        <ImeItem aria-label="Tools"><svg width="15" height="15"><path d="M1.500 13.500 8 7" stroke="#4a5068" strokeWidth="3" strokeLinecap="round" /><path d="M11.500 1 9 3.500l.5 2 2 .5L14 3.500c1.500 4-3 7-6 4.500S7.500 0 11.500 1z" fill="#4a5068" /></svg></ImeItem>
      </ImeBar>
    </StatusBar>

    <Taskbar>
      <TaskButton aria-label="Start"><svg width="16" height="16"><path d="M0 2.300 6.500 1.400v6.200H0zM7.300 1.300 16 0v7.600H7.300zM0 8.400h6.500v6.200L0 13.700zM7.300 8.400H16V16l-8.700-1.300z" fill="#fff" /></svg></TaskButton>
      <TaskButton aria-label="Search"><svg width="16" height="16"><circle cx="10" cy="6" r="5.300" fill="none" stroke="#fff" strokeWidth="1.300" /><path d="M6 10 .5 15.500" stroke="#fff" strokeWidth="1.400" /></svg></TaskButton>
      <TaskButton aria-label="Task view"><svg width="17" height="16"><path d="M.5 0v2.500h11V0M.5 16v-2.500h11V16M1.500 5.500h9v5h-9zM14.500 0v16" fill="none" stroke="#fff" strokeWidth="1.200" /><path d="M13 4h3v3h-3z" fill="#fff" /></svg></TaskButton>
      <OpenApps>
        <TaskButton $open aria-label="File Explorer"><svg width="22" height="20"><path d="M0 1h8l2 2h12v15H0z" fill="#e8b64c" /><path d="M0 4h22v14H0z" fill="#ffe08c" /><path d="M4 10h14v9h-4v-5H8v5H4z" fill="#3aaee8" /></svg></TaskButton>
        <TaskButton $open aria-label="Viewer"><svg width="24" height="24"><circle cx="12" cy="12" r="11" fill="#1b7fc0" stroke="#dfe9f0" strokeWidth="2" /><path d="M7 7.500h10M6 10.500h12M13 6l-6 9M10 12.500h6v6h-6zM10 15.500h6" fill="none" stroke="#fff" strokeWidth="1.300" /></svg></TaskButton>
        <TaskButton $open aria-label="Messenger"><svg width="24" height="24"><circle cx="12" cy="12" r="12" fill="#3296fa" /><path d="M5.500 5c4 2 8 2.500 12 4.500 1 1-.5 3.500-1.500 5h2l-4.500 5 .5-3.500h-2l1-2c-2 0-3.500-1-4-2h2c-2.500-1-4-2.500-4.500-4l2 .5C6.500 7 5.500 6 5.500 5z" fill="#fff" /></svg></TaskButton>
        <TaskButton $open $active aria-label="DIALux"><Icon name="dialux" size={24} /></TaskButton>
      </OpenApps>
      <Spacer />
      <Tray>
        <TrayButton aria-label="Show hidden icons"><svg width="12" height="7"><path d="M.5 6.500 6 1l5.500 5.500" fill="none" stroke="#fff" strokeWidth="1.300" /></svg></TrayButton>
        <TrayButton aria-label="Network"><svg width="17" height="14"><path d="M5 2.500h11v8H4v-5M7 13.500h7M10.500 10.500v3M.5 .5h4v4h-4zM2.500 4.500v5" fill="none" stroke="#fff" strokeWidth="1.200" /></svg></TrayButton>
        <TrayButton aria-label="Volume"><svg width="17" height="14"><path d="M.5 5h2.500l3.500-3.500v11L3 9H.5zM8.500 4.500c1.200 1.500 1.200 3.500 0 5M11 2.500c2.200 2.500 2.200 6.500 0 9M13.500 .8c3 3.500 3 9 0 12.400" fill="none" stroke="#fff" strokeWidth="1.100" /></svg></TrayButton>
        <TrayButton $wide aria-label="Input method"><SogouMark size={17} /></TrayButton>
        <Clock>9:55<br />2021/8/26</Clock>
        <Notify aria-label="Notifications, 4 new">
          <svg width="26" height="26" viewBox="0 0 26 26">
            <path d="M1 1h16v12H9l-4 4v-4H1z" fill="#fff" /><path d="M4 4.500h10M4 7.500h10M4 10.500h6" stroke="#303033" strokeWidth="1.200" />
            <circle cx="16" cy="17" r="8" fill="#3d3d40" stroke="#a0a0a0" />
            <text x="16" y="21" fill="#fff" fontSize="11" textAnchor="middle">4</text>
          </svg>
        </Notify>
      </Tray>
    </Taskbar>
  </Window>
);

export default App;
